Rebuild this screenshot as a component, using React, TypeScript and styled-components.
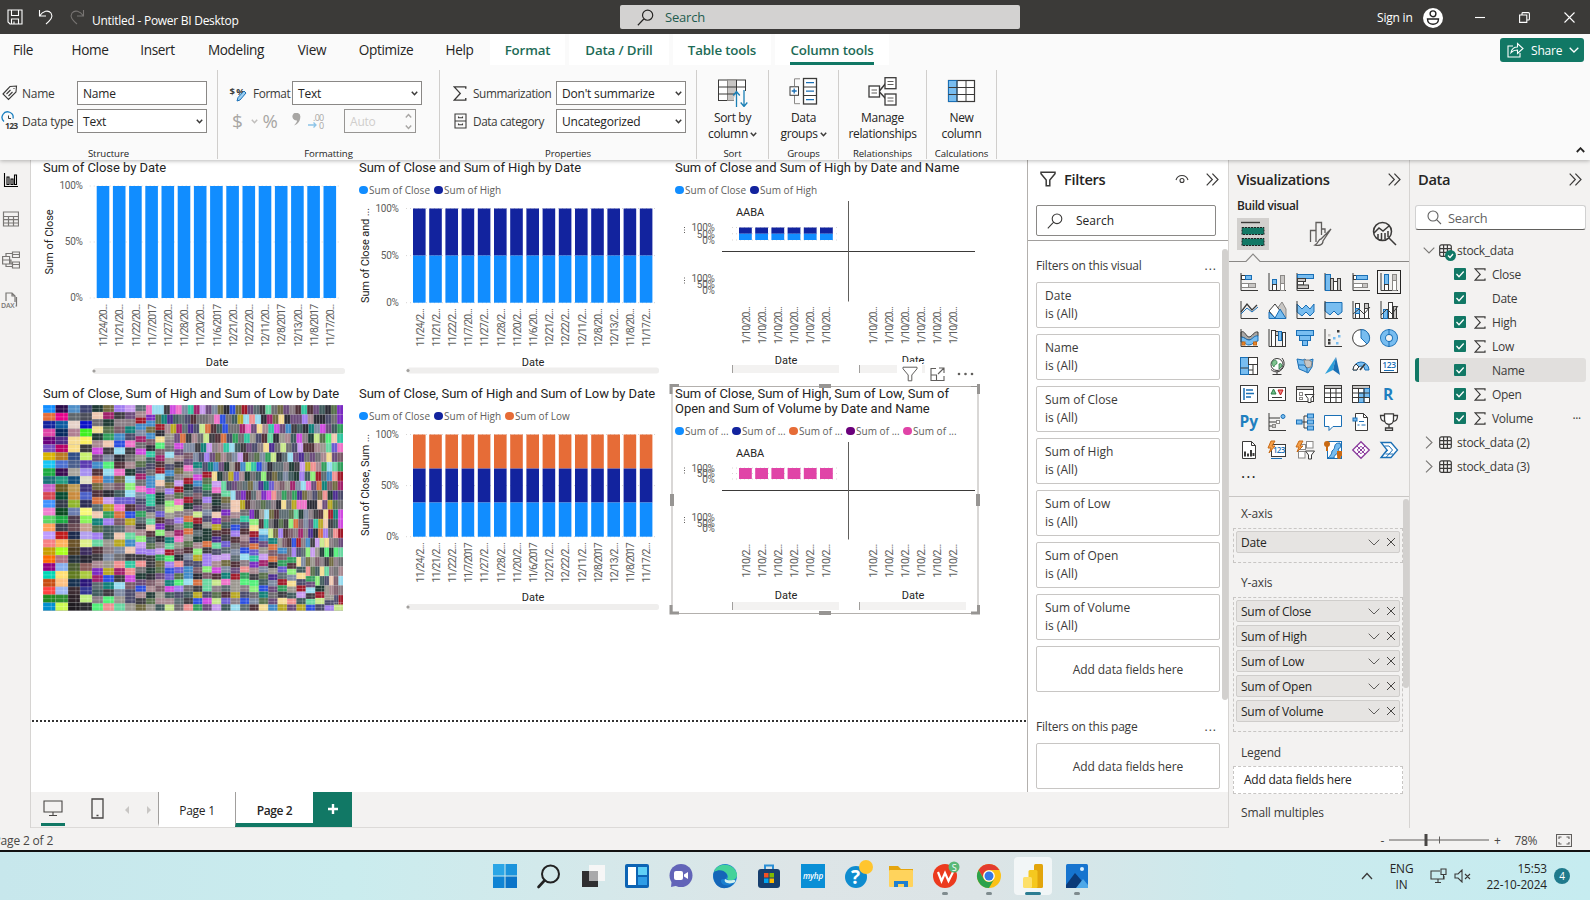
import React from 'react';
import styled, { createGlobalStyle } from 'styled-components';

const GREEN = '#117865';
const INK = '#252423';
const BLUE = '#118dff';
const NAVY = '#12239e';
const ORANGE = '#e66c37';
const PURPLE = '#6b007b';
const PINK = '#e044a7';
const UI = '"Open Sans", "Noto Sans", sans-serif';

const Global = createGlobalStyle`
  *{box-sizing:border-box}
  body{margin:0;overflow:hidden;font-family:${UI};font-size:12px;letter-spacing:-.2px;color:${INK};background:#fff}
  svg{display:block;flex:none}
`;

const Window = styled.div`width:1590px;height:900px;display:flex;flex-direction:column;overflow:hidden;`;

/* ---------- title bar ---------- */
const TitleBar = styled.header`height:34px;background:#3b3a38;color:#fff;display:flex;align-items:center;flex:none;`;
const QuickTools = styled.div`display:flex;gap:15px;padding-left:7px;width:92px;`;
const DocTitle = styled.div`width:528px;padding-top:7px;letter-spacing:-.27px;white-space:nowrap;`;
const TopSearch = styled.div`width:400px;height:24px;background:#d3d2d1;border-radius:2px;display:flex;align-items:center;gap:11px;padding-left:17px;color:#1f5c4f;font-size:13px;`;
const Account = styled.div`margin-left:auto;display:flex;align-items:center;gap:10px;width:213px;padding-top:1px;`;
const WinButtons = styled.div`display:flex;gap:34px;margin-left:22px;`;

/* ---------- ribbon ---------- */
const TabRow = styled.nav`height:34px;background:#fafafa;display:flex;flex:none;position:relative;z-index:4;font-size:14px;`;
const Tab = styled.div<{ $w: number; $ctx?: boolean; $on?: boolean }>`
  width:${p => p.$w}px;height:31px;display:flex;justify-content:center;line-height:32px;white-space:nowrap;letter-spacing:${p => (p.$ctx ? -.15 : -.34)}px;
  color:${p => (p.$ctx ? '#1d6b56' : INK)};font-weight:${p => (p.$ctx ? 600 : 400)};
  background:${p => (p.$ctx ? '#fff' : 'transparent')};margin-right:${p => (p.$ctx ? 4 : 0)}px;font-size:${p => (p.$ctx ? 13.3 : 13.6)}px;
  span{border-bottom:${p => (p.$on ? `3px solid ${GREEN}` : '0')};height:31px}
`;
const TabGap = styled.i`width:10px;`;
const Share = styled.div`margin-left:auto;margin-right:6px;margin-top:4px;width:84px;height:24px;border-radius:3px;background:${GREEN};color:#fff;display:flex;align-items:center;padding-left:7px;gap:7px;font-size:12px;`;
const Ribbon = styled.div`height:92px;background:#fafafa;display:flex;flex:none;position:relative;z-index:3;box-shadow:0 1px 4px rgba(0,0,0,.28);padding-top:2px;`;
const Group = styled.section<{ $w: number }>`width:${p => p.$w}px;height:89px;border-right:1px solid #d0cecc;display:flex;flex-direction:column;flex:none;`;
const GroupBody = styled.div`flex:1;display:flex;flex-direction:column;gap:4px;padding-top:11px;`;
const GroupName = styled.div`height:11px;line-height:12px;font-size:9.6px;text-align:center;letter-spacing:-.05px;`;
const FieldRow = styled.div<{ $pad: number }>`display:flex;height:24px;align-items:center;padding-left:${p => p.$pad}px;`;
const FieldLabel = styled.div<{ $w: number; $tight?: boolean }>`width:${p => p.$w}px;padding-left:${p => (p.$tight ? 6 : 4)}px;white-space:nowrap;color:#3b3a39;font-size:${p => (p.$tight ? 11.8 : 12)}px;letter-spacing:${p => (p.$tight ? -.4 : -.25)}px;`;
const Box = styled.div<{ $w: number; $dim?: boolean }>`
  width:${p => p.$w}px;height:24px;border:1px solid ${p => (p.$dim ? '#979593' : '#8a8886')};background:${p => (p.$dim ? '#fafafa' : '#fff')};
  display:flex;align-items:center;justify-content:space-between;padding:1px 3px 0 5px;color:${p => (p.$dim ? '#d0cecc' : INK)};letter-spacing:-.2px;
`;
const Dim = styled.span<{ $w: number; $s?: number }>`width:${p => p.$w}px;font-size:${p => p.$s ?? 19}px;color:#a8a6a4;line-height:24px;`;
const BigButton = styled.div`flex:1;display:flex;flex-direction:column;align-items:center;padding-top:7px;line-height:16px;text-align:center;letter-spacing:-.33px;
  svg{margin-bottom:3px} div{display:flex;align-items:center;gap:2px} div svg{margin:0}
`;
const Collapse = styled.div`margin-left:auto;margin-right:5px;margin-top:77px;`;

/* ---------- body ---------- */
const Body = styled.div`height:668px;display:flex;flex:none;`;
const Rail = styled.aside`width:31px;background:#f3f2f1;border-right:1px solid #d6d4d2;display:flex;flex-direction:column;align-items:flex-start;flex:none;padding-top:12px;`;
const RailItem = styled.div`height:40.3px;padding-left:2px;display:flex;align-items:flex-start;&:first-child{height:39px}`;
const Center = styled.main`width:1197px;display:flex;flex-direction:column;flex:none;`;
const Work = styled.div`height:632px;display:flex;`;
const Canvas = styled.div`width:996px;position:relative;background:#fff;overflow:hidden;`;
const VisualGrid = styled.div`display:grid;grid-template-columns:repeat(3,316px);grid-template-rows:226px 228px;padding-left:12px;`;
const Visual = styled.article`position:relative;width:316px;`;
const VTitle = styled.h3`margin:0;font:400 13px/15px Roboto,sans-serif;letter-spacing:-.04px;white-space:nowrap;`;
const VHead = styled.div<{ $h: number }>`height:${p => p.$h}px;overflow:visible;`;
const Legend = styled.div<{ $gap: number }>`display:flex;gap:${p => p.$gap}px;margin-top:7px;height:16px;align-items:center;font-size:10px;color:#605e5c;letter-spacing:.03px;white-space:nowrap;`;
const Key = styled.span<{ $c: string; $w: number }>`display:flex;align-items:center;gap:1.5px;width:${p => p.$w}px;
  &::before{content:"";width:8.5px;height:8.5px;border-radius:50%;background:${p => p.$c};flex:none}
`;
const PageEdge = styled.div`position:absolute;top:560px;left:1px;right:1px;height:2px;background:repeating-linear-gradient(90deg,#333 0 2px,#fff 2px 4px);`;
const Selection = styled.svg`position:absolute;left:-5px;top:-2px;overflow:visible;`;
const VisualTools = styled.div`position:absolute;left:222px;top:-24px;width:80px;height:24px;display:flex;gap:12px;align-items:center;padding-left:5px;background:linear-gradient(90deg,#fff 0 25px,transparent 25px 28px,#fff 28px);`;

const Filters = styled.aside`width:201px;border-left:1px solid #b3b0ad;background:#fff;flex:none;display:flex;flex-direction:column;overflow:hidden;`;
const PanelHead = styled.div<{ $pl: number; $pr: number }>`height:40px;display:flex;align-items:center;padding:0 ${p => p.$pr}px 2px ${p => p.$pl}px;font-size:14.7px;font-weight:600;letter-spacing:-.35px;gap:8px;flex:none;`;
const Push = styled.i`margin-left:auto;`;
const SearchBox = styled.div`margin:5px 0 0 8px;width:180px;height:31px;border:1px solid #8a8886;border-radius:2px;display:flex;align-items:center;padding-left:10px;gap:13px;letter-spacing:0;`;
const FilterScroll = styled.div`margin-top:4px;border-top:1px solid #a19f9d;flex:1;display:flex;padding-left:8px;`;
const FilterList = styled.div`width:184px;display:flex;flex-direction:column;gap:6px;`;
const FilterHead = styled.div<{ $h: number }>`height:${p => p.$h}px;display:flex;justify-content:space-between;align-items:flex-end;padding:0 3px 2px 0;letter-spacing:-.2px;line-height:17px;white-space:nowrap;color:#3b3a39;b{font-weight:400;letter-spacing:1px}`;
const FilterCard = styled.div`height:46px;border:1px solid #c8c6c4;border-radius:2px;padding:4px 8px;line-height:18px;letter-spacing:0;color:#3b3a39;flex:none;`;
const DropCard = styled(FilterCard)`display:flex;align-items:center;justify-content:center;padding:2px 0 0;letter-spacing:-.09px;`;
const Scroll = styled.div<{ $h: number; $mt: number }>`width:6px;height:${p => p.$h}px;margin-top:${p => p.$mt}px;background:#d2d0ce;border-radius:3px;margin-left:auto;`;

const PageBar = styled.div`height:36px;background:#f3f2f1;display:flex;align-items:stretch;border-bottom:1px solid #dcdad8;`;
const ViewModes = styled.div`width:127px;display:flex;align-items:center;padding-left:10px;`;
const Mode = styled.div<{ $on?: boolean }>`width:24px;height:32px;border-bottom:3px solid ${p => (p.$on ? GREEN : 'transparent')};display:flex;align-items:center;justify-content:center;margin-right:${p => (p.$on ? 20 : 15)}px;`;
const PageTab = styled.div<{ $on?: boolean }>`width:${p => (p.$on ? 78 : 77)}px;background:#fff;border-left:1px solid #a19f9d;border-bottom:4px solid ${p => (p.$on ? GREEN : '#fff')};display:flex;align-items:center;justify-content:center;padding-top:5px;font-weight:${p => (p.$on ? 600 : 400)};letter-spacing:${p => (p.$on ? -.4 : -.25)}px;`;
const AddPage = styled.div`width:39px;background:${GREEN};display:flex;align-items:center;justify-content:center;padding-bottom:2px;`;

const Side = styled.aside<{ $w: number }>`width:${p => p.$w}px;background:#f3f2f1;border-left:1px solid #d6d4d2;display:flex;flex-direction:column;flex:none;overflow:hidden;`;
const BuildLabel = styled.div`height:16px;line-height:11px;padding-left:8px;font-weight:600;letter-spacing:-.35px;font-size:11.9px;`;
const BuildTabs = styled.div`height:34px;margin-top:1px;display:flex;align-items:center;padding-left:8px;gap:39px;`;
const BuildTab = styled.div<{ $on?: boolean }>`width:${p => (p.$on ? 32 : 25)}px;height:32px;display:flex;align-items:center;justify-content:center;background:${p => (p.$on ? '#d2d0ce' : 'transparent')};`;
const IconGrid = styled.div`display:grid;grid-template-columns:repeat(6,28px);grid-auto-rows:28px;padding:4px 0 0 7px;height:200px;`;
const IconCell = styled.div<{ $on?: boolean }>`width:24px;height:24px;margin:1px 0 0 1px;border:1px solid ${p => (p.$on ? '#252423' : 'transparent')};display:flex;align-items:center;justify-content:center;`;
const Dots = styled.div`height:31px;padding-left:12px;font-size:16px;letter-spacing:1px;line-height:14px;`;
const Wells = styled.div`border-top:1px solid #c8c6c4;flex:1;display:flex;`;
const WellList = styled.div`width:174px;padding:4px 0 0 4px;`;
const WellName = styled.div<{ $h?: number }>`height:${p => p.$h ?? 27}px;line-height:25px;padding-left:8px;letter-spacing:-.15px;color:#3b3a39;white-space:nowrap;`;
const Well = styled.div<{ $mb: number; $white?: boolean }>`border:1px dashed #c8c6c4;background:${p => (p.$white ? '#fff' : 'transparent')};padding:2px 2px ${p => (p.$white ? 2 : 9)}px 2px;display:flex;flex-direction:column;gap:3px;margin-bottom:${p => p.$mb}px;`;
const Pill = styled.div<{ $plain?: boolean }>`height:22px;background:${p => (p.$plain ? 'transparent' : '#e6e4e2')};border:1px solid ${p => (p.$plain ? 'transparent' : '#cfcdcb')};border-radius:2px;display:flex;align-items:center;padding:0 3px 0 ${p => (p.$plain ? 7 : 4)}px;gap:6px;letter-spacing:-.23px;white-space:nowrap;`;

const DataSearch = styled.div`margin:5px 4px 0 5px;height:25px;background:#fff;border:1px solid #d1d1d1;border-bottom-color:#605e5c;border-radius:3px;display:flex;align-items:center;gap:6px;padding-left:11px;color:#616161;font-size:12.8px;`;
const Tree = styled.div`padding:8px 4px 0 5px;`;
const TreeRow = styled.div<{ $on?: boolean; $pad: number }>`height:24px;display:flex;align-items:center;padding-left:${p => p.$pad - (p.$on ? 4 : 0)}px;background:${p => (p.$on ? '#e1dfdd' : 'transparent')};border-left:${p => (p.$on ? `4px solid ${GREEN}` : '0')};border-radius:3px;letter-spacing:-.28px;white-space:nowrap;padding-right:5px;color:#3b3a39;`;
const SigmaSlot = styled.span`width:26px;padding-left:8px;`;
const TableSlot = styled.span<{ $ml?: number }>`width:18px;margin-left:${p => p.$ml ?? 4}px;position:relative;`;
const OkBadge = styled.svg`position:absolute;left:6px;top:6px;`;

/* ---------- status + taskbar ---------- */
const Status = styled.footer`height:24px;background:#f3f2f1;display:flex;align-items:center;justify-content:space-between;flex:none;border-bottom:2px solid #111;color:#484644;padding:2px 18px 0 0;
  > span{margin-left:-6.5px;letter-spacing:-.17px}`;
const ZoomBar = styled.div`display:flex;align-items:center;gap:5px;letter-spacing:-.4px;`;
const ZoomValue = styled.span`margin:0 14px 0 9px;`;
const Gap = styled.i<{ $w: number }>`width:${p => p.$w}px;flex:none;`;
const Taskbar = styled.div`height:48px;display:flex;align-items:center;background:linear-gradient(90deg,#c7e7ec 0,#caecee 22%,#dde5e7 50%,#dce4e6 62%,#cbeaed 78%,#c6ecf0 100%);position:relative;`;
const AppRow = styled.div`display:flex;padding-left:483px;`;
const AppSlot = styled.div<{ $on?: boolean; $dot?: boolean }>`width:44px;height:46px;display:flex;align-items:center;justify-content:center;position:relative;
  &::before{content:"";position:absolute;inset:4px 3px;border-radius:4px;background:${p => (p.$on ? 'rgba(255,255,255,.65)' : 'transparent')}}
  &::after{content:"";position:absolute;bottom:4px;width:${p => (p.$on ? 16 : 6)}px;height:3px;border-radius:2px;background:${p => (p.$on ? '#2b7d92' : p.$dot ? '#7f8b8e' : 'transparent')}}
  svg{position:relative}
`;
const Tray = styled.div`margin-left:auto;display:flex;align-items:center;padding-right:20px;font-size:11.8px;line-height:16px;letter-spacing:-.1px;`;
const TrayText = styled.div<{ $w: number; $a?: string }>`width:${p => p.$w}px;text-align:${p => p.$a ?? 'center'};`;
const Count = styled.div`width:16px;height:16px;border-radius:50%;background:#1f7a8c;color:#fff;font-size:10px;display:flex;align-items:center;justify-content:center;margin-left:7px;`;

/* ---------- shared glyphs ---------- */
const Lines = ({ d, w = 16, h = 16, c = '#3b3a39', s = 1.1, box }: { d: string; w?: number; h?: number; c?: string; s?: number; box?: string }) => (
  <svg width={w} height={h} viewBox={box ?? `0 0 ${w} ${h}`} fill="none" stroke={c} strokeWidth={s}><path d={d} /></svg>
);
const Caret = ({ c = '#3b3a39' }: { c?: string }) => <Lines w={7} h={5} c={c} s={1.5} d="M.8 .8 3.5 3.7 6.2.8" />;
const Chevrons = () => <Lines w={13} h={13} s={1.2} d="M.7.7 6.3 6.5.7 12.3M6.4.7 12 6.5 6.4 12.3" />;
const Sigma = ({ w = 12, h = 13 }: { w?: number; h?: number }) => <Lines w={w} h={h} box="0 0 12 13" s={1.2} d="M11 2.4V.8H1l5.2 5.6L1 12.2h10v-1.7" />;
const Lens = ({ c = '#3b3a39', s = 16 }: { c?: string; s?: number }) => <Lines w={s} h={s} box="0 0 16 16" c={c} d="M10 1a4.8 4.8 0 1 1 0 9.6A4.8 4.8 0 0 1 10 1ZM6.6 9.2.8 15.3" />;
const Funnel = ({ s = 16, c = '#3b3a39', w = 1.5 }: { s?: number; c?: string; w?: number }) => <Lines w={s} h={s} box="0 0 16 16" c={c} s={w} d="M1 1.2h14v1.6L9.8 9v5.8H6.2V9L1 2.8Z" />;
const TableGlyph = () => <Lines w={13} h={13} s={1.2} d="M2.5.8h8a1.8 1.8 0 0 1 1.8 1.8v8a1.8 1.8 0 0 1-1.8 1.8h-8A1.8 1.8 0 0 1 .7 10.600V2.600A1.800 1.800 0 0 1 2.500.8ZM.7 4.600h11.600M.7 8.400h11.600M4.600.8v11.600M8.400.8v11.600" />;

/* ---------- charts ---------- */
const VText = ({ x, y, len, children, size = 10.5, fill = '#605e5c' }: { x: number; y: number; len: number; children: string; size?: number; fill?: string }) => (
  <text transform={`translate(${x} ${y}) rotate(-90)`} textLength={len} fontSize={size} fontFamily="Roboto" fill={fill}>{children}</text>
);
const Tick = ({ x, y, children }: { x: number; y: number; children: string }) => (
  <text x={x} y={y + 3.4} textAnchor="end" fontSize="10" fontFamily="Roboto" letterSpacing="-.3" fill="#605e5c">{children}</text>
);
const DateWord = ({ x, y }: { x: number; y: number }) => (
  <text x={x - 11.300} y={y + 4} textLength="22.500" fontSize="11" fontFamily="Roboto" fill={INK}>Date</text>
);

interface ColumnProps {
  top: number; plot: [number, number]; x0: number; tickX: number; labels: string[]; bottom: number; labelLen: number;
  axis: string; axisSpan: [number, number]; dateY: number; barY: number; parts: [number, string][]; from: number;
}
const ColumnPlot = (p: ColumnProps) => {
  const [y0, y1] = p.plot;
  const h = y1 - y0;
  return (
    <svg width="316" height={226 - p.top} viewBox={`0 ${p.top} 316 ${226 - p.top}`} overflow="visible">
      {[0, .5, 1].map(t => <line key={t} x1={p.x0 - 7} x2={p.x0 + 244} y1={y0 + h * t} y2={y0 + h * t} stroke="#d8d6d4" strokeDasharray="1 3" />)}
      {['100%', '50%', '0%'].map((t, i) => <Tick key={t} x={p.tickX} y={y0 + (h * i) / 2}>{t}</Tick>)}
      {p.labels.map((l, i) => {
        let acc = 0;
        return (
          <g key={i}>
            {p.parts.map(([f, c], j) => {
              const yy = y0 + h * acc;
              acc += f;
              return <rect key={j} x={p.x0 + i * 16.2} y={yy} width="12.600" height={h * f} fill={c} />;
            })}
            <VText x={p.x0 + i * 16.2 + 10.5} y={p.bottom} len={p.labelLen}>{l}</VText>
          </g>
        );
      })}
      <VText x={9.700} y={p.axisSpan[1]} len={p.axisSpan[1] - p.axisSpan[0]} fill={INK} size={11}>{p.axis}</VText>
      <DateWord x={174} y={p.dateY} />
      <rect x={p.from} y={p.barY} width="252" height="6" rx="2.500" fill="#efeeed" />
      <circle cx={p.from + 1} cy={p.barY + 3} r="1.600" fill="#a19f9d" />
    </svg>
  );
};

interface MultiplesProps {
  top: number; name: number; plot: [number, number]; second: number; cross: [number, number, number]; label: string; labelLen: number;
  bottom: number; dateY: number; barY: number; parts: [number, string][]; step: number;
}
const MultiplesPlot = (p: MultiplesProps) => {
  const [y0, y1] = p.plot;
  const six = [0, 1, 2, 3, 4, 5];
  return (
    <svg width="316" height={227 - p.top} viewBox={`0 ${p.top} 316 ${227 - p.top}`} overflow="visible">
      <text x="61" y={p.name + 4} fontSize="11" textLength="28" fontFamily="Roboto" fill={INK}>AABA</text>
      {[y0, (y0 + y1) / 2, y1].map(y => <line key={y} x1="57" x2="164" y1={y} y2={y} stroke="#d8d6d4" strokeDasharray="1 3" />)}
      {[y0 + .5, p.second].map(y => (
        <g key={y}>
          {['100%', '50%', '0%'].map((t, i) => <Tick key={t} x={39.500} y={y + i * p.step}>{t}</Tick>)}
          <path d={`M9.500 ${y - 1}v6`} stroke="#605e5c" strokeDasharray="1 1.500" />
        </g>
      ))}
      {six.map(i => {
        let acc = 0;
        return p.parts.map(([f, c], j) => {
          const yy = y0 + (y1 - y0) * acc;
          acc += f;
          return <rect key={`${i}-${j}`} x={64 + i * 16.2} y={yy} width="12.800" height={(y1 - y0) * f} fill={c} />;
        });
      })}
      <path d={`M47 ${p.cross[0]}H300`} stroke="#3b3a39" />
      <path d={`M173.500 ${p.cross[1]}V${p.cross[2]}`} stroke="#605e5c" />
      {[0, 127].map(dx => (
        <g key={dx}>
          {six.map(i => <VText key={i} x={74.500 + dx + i * 16.1} y={p.bottom} len={p.labelLen}>{p.label}</VText>)}
          <DateWord x={111 + dx} y={p.dateY} />
          <rect x={57 + dx} y={p.barY} width="107" height="8" fill="#f3f2f1" />
          <path d={`M${57.500 + dx} ${p.barY}v8`} stroke="#a19f9d" />
        </g>
      ))}
    </svg>
  );
};

const SEEDED = ['#118dff', '#e66c37', '#12239e', '#e044a7', '#6b007b', '#744ec2', '#d9b300', '#15c6f4', '#1aab40', '#197278', '#c860c8', '#d64550', '#4092ff', '#f07fd0', '#5cd666', '#ffa058', '#be9cff', '#f87f83', '#c89d00', '#ff6a00', '#920080', '#00d6b4', '#c84c10', '#ff4141', '#1f8a1f', '#0090d0'];
const SECOND = ['#2a0a4a', '#e8008a', '#0b5aa0', '#06295e', '#4b2a86', '#b80068', '#b87a20', '#4a6fd0', '#3a0a50', '#1f9a80', '#6b5a20', '#064a30', '#333a48', '#0a4a20', '#1aab40', '#3a3d48', '#c01a1a', '#ffb05a', '#a8ff1a', '#b07080', '#86aef0', '#ffdf70', '#ffc080', '#a0b8f4', '#2d8c2d', '#cdfb50'];
const THIRD = ['#4f8fc8', '#5e666c', '#e6d2c8', '#b07f92', '#f7dd92', '#f9dd86', '#2f4c86', '#4a5e8c', '#a8a49c', '#0f4a78', '#c09a50', '#c98a3c', '#8fb52a', '#6a7cae', '#4c3a4a', '#6a4a52', '#1c2a4c', '#6a5228', '#4a3a20', '#23303a', '#4a5a30', '#5f7a1e', '#16304e', '#3a2a30', '#2a2026', '#1e1a20'];
const FOURTH = ['#3c4270', '#4a4c58', '#0a10c8', '#3cf01e', '#fbf060', '#3a3a3e', '#c8f26e', '#5a3ab0', '#a690f0', '#e2dfc4', '#3a2f78', '#4a60c8', '#2c2c54', '#f8f878', '#8cf45a', '#c8a08e', '#b4a0f0', '#dff08a', '#3a2a5c', '#262430', '#8a5a58', '#a8c83c', '#2a1478', '#303490', '#c0f080', '#2a2c30'];
const LIVELY = ['#f070c8', '#8cf078', '#a07cf0', '#2fc6a0', '#f5dc90', '#96dcf0', '#2a4de0', '#a01828', '#f09090', '#c8e88a', '#2f9e5a', '#7a2ac2', '#b8a820', '#a0206a', '#d87040', '#66d8a0', '#c89bf0', '#f0c8b0', '#4a2a90', '#108078', '#6a5ad0', '#50f078', '#d048e0', '#3f8ac8'];
const QUIET = ['#6e6c70', '#3c3a40', '#8a7c84', '#5a6a70', '#2a2a34', '#7a5a68', '#56704a', '#9a968e', '#6a4a7a', '#3f5a5c', '#7e8aa2', '#503038', '#706a40', '#a88890', '#4a4a6a', '#1f3a34'];

const buildTreemap = () => {
  let seed = 4242;
  const rnd = () => { seed = (seed * 1103515245 + 12345) % 2147483648; return seed / 2147483648; };
  const tone = (lively: number) => { const list = rnd() < lively ? LIVELY : QUIET; return list[Math.floor(rnd() * list.length)]; };
  const out: { x: number; y: number; w: number; h: number; c: string; v: boolean }[] = [];
  const known = [SEEDED, SECOND, THIRD, FOURTH];
  const edges = [0, 12.5, 25, 37, 49, 60, 71, 82, 92.5, 103];
  for (let i = 0; i < 21; i++) edges.push(103 + (i + 1) * 9.4);
  const H = 205.5;
  for (let c = 0; c < edges.length - 1; c++) {
    const x = edges[c];
    const w = edges[c + 1] - x;
    const top = c < 9 ? 0 : Math.min(H - 8, (c - 8) * 9.5);
    const n = Math.max(1, Math.round((H - top) / (c < 4 ? 7.9 : c < 8 ? 7 : 6.2)));
    const h = (H - top) / n;
    for (let r = 0; r < n; r++) out.push({ x, y: top + r * h, w, h, c: c < 4 ? known[c][r % 26] : tone(.46), v: false });
    if (c >= 9) {
      const y = (c - 9) * 9.5;
      const m = Math.max(1, Math.round((300 - x) / (6 - (c - 9) * .09)));
      const cw = (300 - x) / m;
      for (let r = 0; r < m; r++) out.push({ x: x + r * cw, y, w: cw, h: 9.5, c: tone(.42), v: true });
    }
  }
  return out;
};
const CELLS = buildTreemap();
const Treemap = () => (
  <svg width="300" height="205.500" viewBox="0 0 300 205.500">
    <rect width="300" height="205.500" fill="#77757a" />
    {CELLS.map((r, i) => <rect key={i} x={r.x} y={r.y} width={r.w} height={r.h} fill={r.c} />)}
    <path
      stroke="#fff" strokeOpacity=".33" strokeWidth=".7" fill="none"
      d={CELLS.map(r => (r.v
        ? `M${r.x} ${r.y + r.h}v${-r.h}h${r.w}M${r.x + r.w / 2} ${r.y}v${r.h}`
        : `M${r.x} ${r.y + r.h}v${-r.h}h${r.w}M${r.x} ${r.y + r.h / 2}h${r.w}M${r.x + r.w * .66} ${r.y}v${r.h}`)).join('')}
    />
  </svg>
);

const L20 = ['11/24/20...', '11/21/20...', '11/22/20...', '11/7/2017', '11/27/20...', '11/28/20...', '11/20/20...', '11/6/2017', '12/21/20...', '12/22/20...', '12/11/20...', '12/8/2017', '12/13/20...', '11/8/2017', '11/17/20...'];
const L2 = ['11/24/2...', '11/21/2...', '11/22/2...', '11/7/20...', '11/27/2...', '11/28/2...', '11/20/2...', '11/6/20...', '12/21/2...', '12/22/2...', '12/11/2...', '12/8/20...', '12/13/2...', '11/8/20...', '11/17/2...'];
const L3 = L2.map((l, i) => ([3, 7, 11, 13].includes(i) ? L20[i] : l));

/* ---------- visual type icons, 18x18 ---------- */
const B = '#78bdf0';
const D = '#3b3a39';
const G = '#c8c6c4';
const K = '#1a6fb5';
const frame = <path d="M1 0v17.500h17" fill="none" stroke={D} />;
const R = (x: number, y: number, w: number, h: number, f: string, s: string = D) => <rect x={x} y={y} width={w} height={h} fill={f} stroke={s} />;
const ICONS: React.ReactNode[] = [
  <>{frame}{R(1.5, 2.500, 5, 4, '#fff')}{R(5.5, 2.500, 6, 4, B, K)}{R(1.5, 10.500, 7, 4, '#fff', '#8a8886')}{R(8.500, 10.500, 7, 4, G, '#8a8886')}</>,
  <>{frame}{R(4.500, 6.500, 4, 5, B, K)}{R(4.500, 11.500, 4, 6, '#fff')}{R(12.500, 2.500, 4, 8, G, '#8a8886')}{R(12.500, 10.500, 4, 7, '#fff', '#8a8886')}</>,
  <>{frame}{R(1.5, 1.500, 16, 4, B, K)}{R(1.5, 5.500, 8, 3, G)}{R(1.5, 8.500, 6, 3.500, '#fff')}{R(1.5, 12, 11, 3.500, G)}</>,
  <>{frame}{R(1.5, 1.500, 5, 16, B, K)}{R(6.500, 5.500, 3, 12, G)}{R(9.500, 8.500, 4, 9, '#fff')}{R(13.500, 5.500, 3, 12, G)}</>,
  <>{frame}{R(1.5, 2.500, 6, 4, '#fff')}{R(4.500, 2.500, 11, 4, B, K)}{R(1.5, 10.500, 9, 4, '#fff', '#8a8886')}{R(10.500, 10.500, 5, 4, G, '#8a8886')}</>,
  <>{frame}{R(4.500, 1.500, 4, 10, B, K)}{R(4.500, 11.500, 4, 6, '#fff')}{R(12.500, 1.500, 4, 6, G, '#8a8886')}{R(12.500, 7.500, 4, 10, '#fff', '#8a8886')}</>,
  <>{frame}<path d="M1 13 7 7l5 4 6-5" fill="none" stroke={K} /><path d="m1 11 6-8 5 6 5-5" fill="none" stroke={D} strokeWidth="1.300" /></>,
  <><path d="m9 8 5-7 4 7v9h-6Z" fill={G} stroke="#8a8886" /><path d="m1 10 6-7 6 8-6 6Z" fill="#fff" stroke={D} /><path d="M1 11 7 17l5-9 6 9.500H1Z" fill={B} stroke={K} /></>,
  <><path d="m1 3 5 5 4-4 4 4 4-5v8l-4 4-4-4-4 4-5-4Z" fill={B} stroke={K} />{frame}</>,
  <><path d="M1 1.500h17V11l-4 3-4-4-4 4-5-4Z" fill={B} stroke={K} />{frame}</>,
  <>{frame}{R(3.500, 2.500, 4, 15, '#fff')}{R(3.500, 7.500, 4, 5, B, K)}{R(12.500, 2.500, 4, 15, '#fff')}{R(12.500, 2.500, 4, 5, G)}<path d="m1 13 6-5 5 5 6-7" fill="none" stroke={D} /></>,
  <>{frame}{R(3.500, 8.500, 4, 9, B, K)}{R(8.500, 1.500, 4, 16, '#fff')}{R(13.500, 5.500, 3, 12, G)}<path d="m1 14 6-6 5 5 6-8" fill="none" stroke={D} /></>,
  <><path d="M1 3c4-2 5 5 8 5s5-6 9-5v4c-4 0-5 4-9 4S5 8 1 8Z" fill="#a9a7a5" stroke={D} /><path d="M1 8c4 0 5 3 8 3s5-5 9-4v5c-4 0-5 4-9 4s-4-4-8-3Z" fill={B} stroke={K} />{R(2, 13, 3, 3, '#e8872e', '#c96a14')}{R(13.500, 13, 3, 3, '#e8872e', '#c96a14')}{frame}</>,
  <>{frame}{R(3.500, 1.500, 4, 16, '#fff')}{R(7.500, 2.500, 4, 4, G)}{R(10.500, 2.500, 3, 9, B, K)}{R(14.500, 3.500, 3, 14, '#fff')}</>,
  <>{R(.5, 1.500, 17, 5, B, K)}{R(3.500, 6.500, 11, 5, B, K)}{R(6.500, 11.500, 5, 5, B, K)}</>,
  <>{frame}{[[4, 10, D], [9, 8, B], [13, 1, D], [14, 6, B], [4, 5, G], [12, 13, B], [4, 13, D]].map(([x, y, c], i) => <rect key={i} x={x as number} y={y as number} width="2.500" height="2.500" fill={c as string} />)}</>,
  <><circle cx="9" cy="9" r="8.400" fill="#fff" stroke={D} /><path d="M9 .6V9l6 6A8.400 8.400 0 0 0 9 .6Z" fill={B} stroke={K} /></>,
  <><circle cx="9" cy="9" r="6" fill="none" stroke={K} strokeWidth="6" /><circle cx="9" cy="9" r="6" fill="none" stroke={B} strokeWidth="4.200" /><path d="M9 6V0M9 12v6" stroke={K} /></>,
  <>{R(.5, .5, 17, 17, '#fff')}{R(.5, .5, 8, 17, B, K)}{R(8.500, .5, 9, 7, '#fff')}<path d="M.5 11h8M13 7.500v10M8.500 13H13" stroke={D} fill="none" /></>,
  <><circle cx="9" cy="7.500" r="6" fill="#fff" stroke={D} /><path d="M5 4c3-2 4 0 4 2s-3 1-3 4c-2-2-3-4-1-6Zm6 3c2-1 3 0 3 2l-3 3Z" fill="#7fc48f" stroke="#2a7a44" strokeWidth=".8" /><path d="M14 1c4 5 2 11-3 13.500-3 1-6 0-8-2M9 14.500V17M4.500 17.500h9" fill="none" stroke={D} /></>,
  <><path d="m1 2 6 1 2-1 2 2 6-2-1 8-4 6-4-2-5-2Z" fill={B} stroke={K} /><path d="M8 3h5l3 2-1 5-5 1Z" fill={G} stroke="#8a8886" /><path d="M2 8h6l3 3v4" fill="none" stroke={K} /></>,
  <><path d="M12 0 1 17l8-4Z" fill="#2fa0da" /><path d="m12 0 4 18-7-5Z" fill="#1a6fb5" /></>,
  <><path d="M1 13a8 8 0 0 1 16 0h-4a4 4 0 0 0-8 0Z" fill={B} stroke={K} /><path d="M1 13a8 8 0 0 1 3-6l3 3a4 4 0 0 0-2 3Z" fill="#fff" stroke={D} /><path d="m8 13 5-6" stroke={D} strokeWidth="1.600" /></>,
  <>{R(.5, 2.500, 17, 13, '#fff')}<text x="2.300" y="11" fontSize="8.500" fontWeight="600" fill={K} textLength="13.500">123</text><path d="M4 13.500h10" stroke={K} /></>,
  <>{R(.5, .5, 17, 17, '#fff')}<path d="M4 3v12M6 5h7M6 8.500h8M6 12h5" stroke={K} strokeWidth="1.500" /></>,
  <>{R(.5, 2.500, 17, 13, '#fff')}<path d="m3 9 2.500-5L8 9Z" fill="#6fc08a" stroke="#2a7a44" /><path d="m10 5 2.500 5L15 5Z" fill="#f08080" stroke="#c01a1a" /><path d="M4 12.500h10" stroke={D} /></>,
  <>{R(.5, 1.500, 17, 15, '#fff')}{R(.5, 1.500, 17, 3, G)}{R(3.500, 7.500, 3, 3, '#fff', '#8a8886')}{R(3.500, 12.500, 3, 2, '#fff', '#8a8886')}<path d="M9 9.500h9l-3 4v4h-3v-4Z" fill="#fff" stroke={D} /></>,
  <>{R(.5, .5, 17, 17, '#fff')}{R(.5, .5, 17, 3, G)}<path d="M.5 8h17M.5 12.500h17M6.500 3v14.500M12 3v14.500" stroke={D} /></>,
  <>{R(.5, .5, 17, 17, '#fff')}{R(.5, .5, 17, 3, G)}{R(12, 3.500, 5.500, 9, B, K)}{R(6.500, 8, 5.500, 9.500, B, K)}<path d="M.5 8h17M.5 12.500h17M6.500 3v14.500M12 3v14.500" stroke={D} /></>,
  <text x="3" y="14.500" fontSize="15.500" fontWeight="700" fill="#1f7fbf">R</text>,
  <text x="-.5" y="14" fontSize="15.500" fontWeight="700" fill="#1f7fbf" letterSpacing="0">Py</text>,
  <>{frame}<path d="M1 5h11M1 9h8M1 13h4" stroke={D} /><circle cx="15" cy="3.500" r="2" fill={B} stroke={K} />{R(8.500, 7.500, 3, 3, '#fff', '#8a8886')}{R(4.500, 11.500, 3, 3, G, '#8a8886')}</>,
  <><path d="M6 9h2V3h3M8 9h3M8 9v6h3" fill="none" stroke={D} />{R(.5, 7, 5.500, 4, B, K)}{R(11.500, 1, 6, 4, B, K)}{R(11.500, 7, 6, 4, B, K)}{R(11.500, 13, 6, 4, B, K)}</>,
  <path d="M.5 2.500h17v11H9l-4 4v-4H.5Z" fill="#fff" stroke={K} />,
  <><path d="M3.500 .5h8l4 4v13h-12Z" fill="#fff" stroke={D} /><path d="M11.500.5v4h4" fill="none" stroke={D} />{R(1, 5, 4, 3, B, K)}<path d="M7 8.500h5M5.500 12h2m2 0h4" stroke={K} /></>,
  <><path d="M4.500 .8h9v6a4.500 4.500 0 0 1-9 0ZM4.500 2.500h-4c0 4 1 5.500 5 6M13.500 2.500h4c0 4-1 5.500-5 6M9 11v4M5.500 17.300h7V15h-7Z" fill="#fff" stroke={D} strokeWidth="1.300" /></>,
  <><path d="M2.500 .5h9l4 4v13h-13Z" fill="#fff" stroke={D} /><path d="M11.500.5v4h4" fill="none" stroke={D} /><path d="M5 10.500v5M8 12.500v3M11 9v6.500M13.500 12v3" stroke={D} strokeWidth="2" /></>,
  <>{R(3.500, 3.500, 14, 12, '#fff')}<text x="5" y="12" fontSize="8" fontWeight="600" fill={K} textLength="12">123</text><path d="M3 17.500h11" stroke={K} /><path d="M3 0 0 7h3l-2 5 6-7H4l3-5Z" fill="#f5a04a" stroke="#c96a14" /></>,
  <>{R(10.500, .5, 6.500, 6.500, '#fff', '#8a8886')}{R(2.500, 10.500, 6.500, 6.500, '#fff', '#8a8886')}{R(4.500, 3.500, 5, 5, '#fff', '#8a8886')}<path d="M9.500 10h9l-3 4v4h-3v-4Z" fill="#fff" stroke={D} /><path d="M3 0 0 6h3l-2 5 6-6H4l3-5Z" fill="#f5a04a" stroke="#c96a14" /></>,
  <>{R(3.500, .5, 14, 17, '#fff', K)}<path d="M16 2c-8 0-3 5-8 8 0 3-2 5-4 7h6c0-5 7-4 4-9 3-1 3-3 2-6Z" fill={B} stroke={K} /><circle cx="3" cy="3" r="3" fill="#c96a14" /><path d="M3 4v6" stroke="#c96a14" strokeWidth="2" /><rect x="13" y="10" width="5" height="5" fill="#c96a14" /><circle cx="15" cy="16" r="2" fill="#c96a14" /></>,
  <><path d="m9 .7 8.300 8.300L9 17.300.7 9Z" fill="#fff" stroke="#8a3a9c" strokeWidth="1.300" /><path d="m5 5 8.200 8.200M13 5l-8.200 8.200M9 5.200 12.800 9 9 12.800 5.200 9Z" stroke="#8a3a9c" fill="none" /></>,
  <><path d="M1 1.500h10L17.500 9 11 16.500H1L7 9Z" fill="#fff" stroke={K} strokeWidth="1.300" /><path d="M4.500 5H9l3.500 4L6 16.500M5.500 13H13M1 16.500 8 9" fill="none" stroke={K} /></>,
];

/* ---------- taskbar logos, 26x26 ---------- */
const APPS: { art: React.ReactNode; dot?: boolean; on?: boolean }[] = [
  { art: <><rect x="1" y="1" width="11.500" height="11.500" fill="#2ba6e6" /><rect x="13.500" y="1" width="11.500" height="11.500" fill="#1c94dc" /><rect x="1" y="13.500" width="11.500" height="11.500" fill="#0f84d4" /><rect x="13.500" y="13.500" width="11.500" height="11.500" fill="#0a74c8" /></> },
  { art: <><circle cx="14.500" cy="11" r="8.500" fill="none" stroke="#222" strokeWidth="2" /><path d="m8.500 17.500-6 6.500" stroke="#222" strokeWidth="2.600" strokeLinecap="round" /></> },
  { art: <><rect x="9" y="2" width="16" height="16" fill="#f6f6f6" /><rect x="2" y="8" width="16" height="16" fill="#2f2f31" /><rect x="9" y="8" width="9" height="10" fill="#a9a9ab" /></> },
  { art: <><rect x="1" y="1" width="24" height="24" rx="2" fill="#0d64b4" /><rect x="4" y="4" width="8" height="18" fill="#fff" /><rect x="14" y="4" width="9" height="8" fill="#5fd0f6" /><rect x="14" y="14" width="9" height="8" fill="#2e9de6" /></> },
  { art: <><circle cx="13" cy="12.500" r="11.500" fill="#6264b8" /><path d="M3 24l1-9 8 7Z" fill="#6264b8" /><rect x="6" y="8" width="9" height="9" rx="2" fill="#fff" /><path d="m16 11.500 4-2.500v7l-4-2.500Z" fill="#fff" /></> },
  { art: <><circle cx="13" cy="13" r="12" fill="#1a7fd0" /><path d="M2 9C5-1 22-1 25 11c1 6-7 8-10 5 4-5-6-10-13-7Z" fill="#44d29a" /><path d="M2 9c8-5 16 2 12 6-1 2-4 0-5 2-1 6 9 7 13 3-5 7-16 7-19-1-2-3-2-7-1-10Z" fill="#1566b8" /><path d="M13 16c-2 4 5 6 10 3 1-2 0-2-2-2s-5 1-8-1Z" fill="#d3f1ef" /></> },
  { art: <><path d="M9 6V2.500h8V6" fill="none" stroke="#2b8fd6" strokeWidth="2" /><rect x="2" y="6" width="22" height="19" rx="3" fill="#173f6e" /><rect x="8" y="10" width="4.500" height="4.500" fill="#f25022" /><rect x="13.500" y="10" width="4.500" height="4.500" fill="#7fba00" /><rect x="8" y="15.500" width="4.500" height="4.500" fill="#00a4ef" /><rect x="13.500" y="15.500" width="4.500" height="4.500" fill="#ffb900" /></> },
  { art: <><rect x="1" y="1" width="24" height="24" fill="#0a8fd6" /><text x="3" y="16" fontSize="9.500" fontWeight="600" fontStyle="italic" fill="#fff" textLength="20" lengthAdjust="spacingAndGlyphs">myhp</text></> },
  { art: <><circle cx="12" cy="14" r="11" fill="#0f8ccf" /><text x="7" y="21" fontSize="19" fontWeight="700" fill="#fff">?</text><circle cx="22" cy="4" r="7" fill="#ffc52e" /></> },
  { art: <><path d="M1 3h9l3 3h12v5H1Z" fill="#e5a50e" /><rect x="1" y="7" width="24" height="17" rx="1" fill="#ffd35c" /><path d="M6 24v-6h14v6Z" fill="#1f7fd0" /><path d="M10 24v-3h6v3Z" fill="#ffd35c" /></> },
  { art: <><circle cx="13" cy="13" r="12" fill="#ec3a1e" /><path d="m6 9 3.500 9L13 10l3.500 8L21 9" fill="none" stroke="#fff" strokeWidth="2.200" /><circle cx="22" cy="4" r="5.500" fill="#59b877" /><text x="19.700" y="7.500" fontSize="9" fill="#fff">S</text></>, dot: true },
  { art: <><circle cx="13" cy="13" r="12" fill="#fbc116" /><path d="M2.600 7A12 12 0 0 1 23.400 7H13a6 6 0 0 0-5.200 9Z" fill="#e33b2e" /><path d="M2.600 7A12 12 0 0 0 13 25l5.200-9a6 6 0 0 1-10.400 0Z" fill="#2ba24c" /><circle cx="13" cy="13" r="5.800" fill="#fff" /><circle cx="13" cy="13" r="4.500" fill="#3478e5" /></>, dot: true },
  { art: <><rect x="14" y="1" width="9" height="24" rx="1.500" fill="#e2a50c" /><rect x="8.500" y="7" width="9" height="18" rx="1.500" fill="#f5c81f" /><rect x="3" y="14" width="9" height="11" rx="1.500" fill="#fde06a" /></>, on: true },
  { art: <><rect x="2" y="1" width="22" height="24" rx="1.500" fill="#1674cf" /><path d="m2 22 9-12 13 15H2Z" fill="#0b3a78" /><path d="m12 25 7-9 5 6v3Z" fill="#4fa8e8" /><circle cx="18" cy="6" r="2" fill="#d9efff" /></>, dot: true },
];

const FIELDS = ['Close', 'Date', 'High', 'Low', 'Name', 'Open', 'Volume'];
const FILTERS = ['Date', 'Name', 'Sum of Close', 'Sum of High', 'Sum of Low', 'Sum of Open', 'Sum of Volume'];
const MENU: [string, number][] = [['File', 46], ['Home', 88], ['Insert', 47], ['Modeling', 110], ['View', 42], ['Optimize', 106], ['Help', 41]];

const FieldPill = ({ name }: { name: string }) => (
  <Pill>{name}<Push /><Lines w={12} h={7} s={1} c="#605e5c" d="m.7.7 5.300 5.300L11.300.7" /><Lines w={10} h={10} s={1} c="#484644" d="m1 1 8 8M9 1 1 9" /></Pill>
);

const Header = () => (
  <>
    <TitleBar>
      <QuickTools>
        <Lines c="#fff" d="M1 1h14v14H3l-2-2ZM4.500 1v5.500h7V1M4.500 15v-5h7v5M7 12.500V15" />
        <Lines c="#fff" d="M1.500 1v6H8M1.500 7C5 2 10 .5 13 4c2.500 4-.5 7-5 11" />
        <Lines c="#777472" d="M14.500 1v6H8M14.500 7C11 2 6 .5 3 4c-2.500 4 .5 7 5 11" />
      </QuickTools>
      <DocTitle>Untitled - Power BI Desktop</DocTitle>
      <TopSearch><Lens s={17} c="#252423" />Search</TopSearch>
      <Account>
        Sign in
        <svg width="20" height="20" viewBox="0 0 20 20"><circle cx="10" cy="10" r="10" fill="#fff" /><circle cx="10" cy="5.800" r="2.900" fill="none" stroke="#222" strokeWidth="1.400" /><path d="M4.500 11h11c0 7-11 7-11 0Z" fill="none" stroke="#222" strokeWidth="1.400" /></svg>
        <WinButtons>
          <Lines w={10} h={11} c="#fff" d="M0 5.500h10" />
          <Lines w={11} h={11} c="#fff" d="M.6 3h7.200v7.400H.600ZM3 3V1.500Q3 .6 4 .6h5.400q1 0 1 1V7q0 1-1 1H8" />
          <Lines w={11} h={11} c="#fff" d="m.5.5 10 10M10.500.5l-10 10" />
        </WinButtons>
      </Account>
    </TitleBar>
    <TabRow>
      {MENU.map(([t, w]) => <Tab key={t} $w={w}><span>{t}</span></Tab>)}
      <TabGap />
      <Tab $ctx $w={75}><span>Format</span></Tab>
      <Tab $ctx $w={100}><span>Data / Drill</span></Tab>
      <Tab $ctx $w={98}><span>Table tools</span></Tab>
      <Tab $ctx $on $w={114}><span>Column tools</span></Tab>
      <Share><Lines c="#fff" w={17} h={16} d="M6 4H1v11h12v-4M4 10.500C5 6 7 5 10.500 5V1.500L16 6.500l-5.500 5V8C7.500 8 6 8.500 4 10.500Z" />Share<Lines c="#fff" w={10} h={6} s={1.3} d="m.7.7 4.300 4.300L9.300.7" /></Share>
    </TabRow>
    <Ribbon>
      <Group $w={218}>
        <GroupBody>
          <FieldRow $pad={2}>
            <Lines d="M1 9 8 1.500l6.500-.5-.5 6L6.500 14.500ZM11.500 3.500h1M4.500 9l4-4M6.500 11l4-4" />
            <FieldLabel $w={59}>Name</FieldLabel><Box $w={130}>Name</Box>
          </FieldRow>
          <FieldRow $pad={2}>
            <svg width="16" height="16" viewBox="0 0 16 16" overflow="visible"><path d="M2 8.500A5.500 5.500 0 1 1 11 5.500" fill="none" stroke="#1a7fc0" strokeWidth="1.300" /><path d="M6.500 2.500v3H9" fill="none" stroke={D} /><text x="3" y="15.500" fontSize="8.500" fontWeight="700" fill={D} textLength="13">123</text></svg>
            <FieldLabel $w={59}>Data type</FieldLabel><Box $w={130}>Text<Caret /></Box>
          </FieldRow>
        </GroupBody>
        <GroupName>Structure</GroupName>
      </Group>
      <Group $w={222}>
        <GroupBody>
          <FieldRow $pad={12}>
            <svg width="17" height="17" viewBox="0 0 17 17" overflow="visible"><text x="-.5" y="9.500" fontSize="9.500" fontWeight="700" fill={D} textLength="15">$%</text><path d="m7 16 1-3.500L14 6l2 2-6 7Z" fill="#9ad0f4" stroke={K} /></svg>
            <FieldLabel $w={45} $tight>Format</FieldLabel><Box $w={130}>Text<Caret /></Box>
          </FieldRow>
          <FieldRow $pad={14}>
            <Dim $w={18}>$</Dim><Gap $w={1} /><Caret c="#c0bebc" /><Dim $w={26} $s={18.500}>&nbsp;%</Dim>
            <svg width="24" height="16" viewBox="0 0 24 16"><path d="M9 1.500a4 4 0 0 1 7.300 2.800C16 9 13 11.500 10 12.500c2-2 3-3.500 3-5A4 4 0 0 1 9 1.500Z" fill="#a8a6a4" /></svg>
            <svg width="17" height="17" viewBox="0 0 17 17" overflow="visible"><text x="5" y="7.500" fontSize="9" fill="#a8a6a4" textLength="11">.00</text><text x="11" y="16" fontSize="9" fill="#a8a6a4">0</text><path d="M0 12h8M5.500 9.500 8 12l-2.500 2.500" fill="none" stroke="#8cc4e8" strokeWidth="1.300" /></svg>
            <Push /><Box $w={72} $dim>Auto<Lines w={7} h={17} c="#a8a6a4" s={1.4} d="M.8 4.500 3.500 1.500l2.700 3M.8 12.500l2.700 3 2.700-3" /></Box><Gap $w={23} />
          </FieldRow>
        </GroupBody>
        <GroupName>Formatting</GroupName>
      </Group>
      <Group $w={257}>
        <GroupBody>
          <FieldRow $pad={13}><Sigma w={14} h={15} /><FieldLabel $w={89} $tight>Summarization</FieldLabel><Box $w={130}>Don't summarize<Caret /></Box></FieldRow>
          <FieldRow $pad={13}><Lines w={14} h={16} d="M2 1h11v14H2ZM2 8h11M5.500 3.500v1.300h4V3.500M5.500 10.500v1.300h4v-1.300" /><FieldLabel $w={89} $tight>Data category</FieldLabel><Box $w={130}>Uncategorized<Caret /></Box></FieldRow>
        </GroupBody>
        <GroupName>Properties</GroupName>
      </Group>
      <Group $w={72}>
        <BigButton>
          <svg width="31" height="30" viewBox="0 0 31 30"><rect x="1.500" y="3" width="27" height="20.500" fill="#fff" stroke={D} /><rect x="10.500" y="3" width="9" height="20.500" fill="#c8c6c4" stroke="#8a8886" /><path d="M1.500 10h27M1.500 17h27M19.500 3v20.500" fill="none" stroke={D} /><path d="M20 14h11v16H17v-9Z" fill="#fafafa" /><path d="M19.500 30V15M16.200 18.500l3.300-4 3.300 4M27 13v16M23.700 25.500l3.300 4 3.300-4" fill="none" stroke="#1a7fb5" strokeWidth="1.300" /></svg>
          <div>Sort by</div><div>column<Caret /></div>
        </BigButton>
        <GroupName>Sort</GroupName>
      </Group>
      <Group $w={70}>
        <BigButton>
          <svg width="29" height="30" viewBox="0 0 29 30"><rect x="14.500" y="1.500" width="13" height="25.500" fill="#fff" stroke={D} strokeWidth="1.300" /><path d="M14.500 10h13M14.500 18.500h13" stroke={D} /><path d="M17 5.700h8M17 14.200h8M17 22.700h8" stroke={K} strokeWidth="1.300" /><path d="M11 1.800H5.500V9M11 26.700H5.500V18" fill="none" stroke="#8a8886" /><rect x="1" y="9.800" width="8.500" height="8.500" fill="#fff" stroke={D} /><path d="M5.200 11.500v5M2.700 14h5" stroke={K} strokeWidth="1.300" /></svg>
          <div>Data</div><div>groups<Caret /></div>
        </BigButton>
        <GroupName>Groups</GroupName>
      </Group>
      <Group $w={88}>
        <BigButton>
          <svg width="29" height="30" viewBox="0 0 29 30"><path d="M11 14.500 18 6M11 14.500 18 22" stroke={D} strokeWidth="1.500" /><rect x="1" y="9" width="10.500" height="11" fill="#fff" stroke={D} strokeWidth="1.300" /><rect x="17" y=".7" width="11" height="11" fill="#fff" stroke={D} strokeWidth="1.300" /><rect x="17" y="17" width="11" height="11" fill="#fff" stroke={D} strokeWidth="1.300" /><path d="M3.500 13h5.500M3.500 16h5.500M19.500 4.500h6M19.500 7.500h6M19.500 21h6M19.500 24h6" stroke="#605e5c" /></svg>
          <div>Manage</div><div>relationships</div>
        </BigButton>
        <GroupName>Relationships</GroupName>
      </Group>
      <Group $w={70}>
        <BigButton>
          <svg width="29" height="30" viewBox="0 0 29 30"><rect x="1.500" y="3.500" width="26" height="21" fill="#fff" stroke={D} strokeWidth="1.200" /><rect x="1.500" y="3.500" width="8.500" height="21" fill={B} stroke={K} /><path d="M1.500 10.500h26M1.500 17.500h26M10 3.500v21M19 3.500v21" stroke={D} /></svg>
          <div>New</div><div>column</div>
        </BigButton>
        <GroupName>Calculations</GroupName>
      </Group>
      <Collapse><Lines w={9} h={6} s={1.8} c="#252423" d="M.8 5 4.500 1.200 8.200 5" /></Collapse>
    </Ribbon>
  </>
);

export default function App() {
  return (
    <Window>
      <Global />
      <Header />
      <Body>
        <Rail>
          <RailItem><Lines w={17} h={16} c="#000" s={1.1} d="M2.500 1v13.500H16M5 12.500V5h2v7.500ZM9 12.500V7h2v5.500ZM12.500 12.500V3h2v9.500Z" /></RailItem>
          <RailItem><Lines w={17} h={16} c="#797775" s={1.2} d="M1.500 1h15v14h-15ZM1.500 5.500h15M1.500 8.700h15M1.500 12h15M6.500 5.500V15M11.500 5.500V15" /></RailItem>
          <RailItem><Lines w={18} h={18} c="#797775" s={1.2} d="M.6 5.500h7v7.500h-7ZM.6 9h7M10.500 1h7v5.500h-7ZM10.500 3.500h7M10.500 11h7v6h-7ZM10.500 13.500h7M4 5.500V2.500h6.500M4 13v2.500h6.500M7.500 9H9v4h1.500" /></RailItem>
          <RailItem><svg width="18" height="18" viewBox="0 0 18 18" overflow="visible"><path d="M4 9V1h6l3 3v6M10 1v3h3M14.500 5v9h-1" fill="none" stroke="#797775" strokeWidth="1.200" /><text x="-1" y="16" fontSize="7" fontWeight="600" fill="#797775">DAX</text></svg></RailItem>
        </Rail>
        <Center>
          <Work>
            <Canvas>
              <VisualGrid>
                <Visual>
                  <VHead $h={22}><VTitle>Sum of Close by Date</VTitle></VHead>
                  <ColumnPlot from={50} top={22} plot={[26, 138]} x0={53.700} tickX={39.500} labels={L20} bottom={186.500} labelLen={42.500} axis="Sum of Close" axisSpan={[49.500, 114.500]} dateY={202} barY={208} parts={[[1, BLUE]]} />
                </Visual>
                <Visual>
                  <VHead $h={41}><VTitle>Sum of Close and Sum of High by Date</VTitle><Legend $gap={5}><Key $w={70} $c={BLUE}>Sum of Close</Key><Key $w={68} $c={NAVY}>Sum of High</Key></Legend></VHead>
                  <ColumnPlot from={48} top={41} plot={[48.500, 142.700]} x0={54} tickX={39.500} labels={L2} bottom={186.500} labelLen={38} axis="Sum of Close and ..." axisSpan={[48, 143]} dateY={201.500} barY={207.500} parts={[[.5, NAVY], [.5, BLUE]]} />
                </Visual>
                <Visual>
                  <VHead $h={41}><VTitle>Sum of Close and Sum of High by Date and Name</VTitle><Legend $gap={5}><Key $w={70} $c={BLUE}>Sum of Close</Key><Key $w={68} $c={NAVY}>Sum of High</Key></Legend></VHead>
                  <MultiplesPlot top={41} name={52} plot={[67.500, 80]} second={118.500} step={6.200} cross={[91.500, 41, 141.500]} label="1/10/20..." labelLen={37.500} bottom={184} dateY={199.500} barY={205} parts={[[.5, NAVY], [.5, BLUE]]} />
                </Visual>
                <Visual>
                  <VHead $h={19}><VTitle>Sum of Close, Sum of High and Sum of Low by Date</VTitle></VHead>
                  <Treemap />
                </Visual>
                <Visual>
                  <VHead $h={41}><VTitle>Sum of Close, Sum of High and Sum of Low by Date</VTitle><Legend $gap={5}><Key $w={70} $c={BLUE}>Sum of Close</Key><Key $w={66} $c={NAVY}>Sum of High</Key><Key $w={68} $c={ORANGE}>Sum of Low</Key></Legend></VHead>
                  <ColumnPlot from={48} top={41} plot={[48.500, 150.700]} x0={54} tickX={39.500} labels={L3} bottom={196.500} labelLen={40} axis="Sum of Close, Sum ..." axisSpan={[48, 150]} dateY={211} barY={218} parts={[[.333, ORANGE], [.333, NAVY], [.334, BLUE]]} />
                </Visual>
                <Visual>
                  <VHead $h={56}><VTitle>Sum of Close, Sum of High, Sum of Low, Sum of<br />Open and Sum of Volume by Date and Name</VTitle><Legend $gap={0}>{[BLUE, NAVY, ORANGE, PURPLE, PINK].map(c => <Key key={c} $w={57} $c={c}>Sum of ...</Key>)}</Legend></VHead>
                  <MultiplesPlot top={56} name={67} plot={[82, 93]} second={132} step={5.300} cross={[104.500, 56, 153.500]} label="1/10/2..." labelLen={33.500} bottom={191.500} dateY={209} barY={216} parts={[[1, PINK]]} />
                  <Selection width="309" height="230">
                    <rect x="2" y="2.500" width="306" height="227" fill="none" stroke="#b3b0ad" />
                    <path d="M1 10V1.500h8M301 1.500h7.500V10M1 221v8h8M301 229h7.500v-8" fill="none" stroke="#979593" strokeWidth="3" />
                    <path d="M149 2h12M149 229h12M2 110v12M308 110v12" stroke="#979593" strokeWidth="4" />
                  </Selection>
                  <VisualTools>
                    <Funnel c="#605e5c" w={1} />
                    <Lines w={15} h={15} c="#605e5c" d="M6 1.500H1v12h13V9M1 8h5.500v5.500M9 1h5v5M14 1 8 7" />
                    <svg width="17" height="4" viewBox="0 0 17 4" fill="#605e5c"><circle cx="2" cy="2" r="1.300" /><circle cx="8.500" cy="2" r="1.300" /><circle cx="15" cy="2" r="1.300" /></svg>
                  </VisualTools>
                </Visual>
              </VisualGrid>
              <PageEdge />
            </Canvas>
            <Filters>
              <PanelHead $pl={12} $pr={9}><Funnel />Filters<Push /><Lines w={14} h={10} d="M1 6C3 0 11 0 13 6M7 4.500a2 2 0 1 1 0 4 2 2 0 0 1 0-4Z" /><Gap $w={1} /><Chevrons /></PanelHead>
              <SearchBox><Lens />Search</SearchBox>
              <FilterScroll>
                <FilterList>
                  <FilterHead $h={35}>Filters on this visual<b>...</b></FilterHead>
                  {FILTERS.map(f => <FilterCard key={f}>{f}<br />is (All)</FilterCard>)}
                  <DropCard>Add data fields here</DropCard>
                  <FilterHead $h={39}>Filters on this page<b>...</b></FilterHead>
                  <DropCard>Add data fields here</DropCard>
                </FilterList>
                <Scroll $h={451} $mt={8} />
              </FilterScroll>
            </Filters>
          </Work>
          <PageBar>
            <ViewModes>
              <Mode $on><Lines w={20} h={17} c="#484644" d="M1 1h18v11H1ZM10 12v3M6 15.500h8" /></Mode>
              <Mode><Lines w={13} h={21} c="#484644" s={1.3} d="M1 1h11v19H1ZM5.500 17.500h2" /></Mode>
              <svg width="30" height="10" viewBox="0 0 30 10" fill="#c8c6c4"><path d="M5 1v8L1 5ZM23 1v8l4-4Z" /></svg>
            </ViewModes>
            <PageTab>Page 1</PageTab>
            <PageTab $on>Page 2</PageTab>
            <AddPage><Lines w={12} h={12} c="#fff" s={2.4} d="M6 1v10M1 6h10" /></AddPage>
          </PageBar>
        </Center>
        <Side $w={181}>
          <PanelHead $pl={8} $pr={8}>Visualizations<Push /><Chevrons /></PanelHead>
          <BuildLabel>Build visual</BuildLabel>
          <BuildTabs>
            <BuildTab $on><svg width="24" height="26" viewBox="0 0 24 26"><path d="M0 1.500h19" stroke={D} strokeWidth="1.400" /><rect x="1" y="6.500" width="22" height="7" fill={GREEN} stroke="#222" strokeDasharray="2 1" /><rect x="1" y="17.500" width="22" height="7" fill={GREEN} stroke="#222" strokeDasharray="2 1" /></svg></BuildTab>
            <BuildTab><Lines w={23} h={26} s={1.3} c="#605e5c" d="M1.500 21V9.500H7M7 21V1.500h5.500V14M12.500 8H16v4M22 8 12 18c-3 0-2 4-6 6 4 1 8 0 8-4Z" /></BuildTab>
            <BuildTab><Lines w={25} h={26} s={1.5} d="M10.500 1.500a9 9 0 1 1 0 18 9 9 0 0 1 0-18ZM17 17l7 7M2 12l5-5 4 3 6-5M6 18v-5M9.500 19v-7M13 18v-6M16 16v-6" /></BuildTab>
          </BuildTabs>
          <Lines w={180} h={14} c="#8a8886" d="M0 10.500H17L24 3l7 7.500H180" />
          <IconGrid>{ICONS.map((ic, i) => <IconCell key={i} $on={i === 5}><svg width="18" height="18" viewBox="0 0 18 18" overflow="visible">{ic}</svg></IconCell>)}</IconGrid>
          <Dots>...</Dots>
          <Wells>
            <WellList>
              <WellName>X-axis</WellName>
              <Well $mb={7}><FieldPill name="Date" /></Well>
              <WellName>Y-axis</WellName>
              <Well $mb={7.5}>{['Close', 'High', 'Low', 'Open', 'Volume'].map(n => <FieldPill key={n} name={`Sum of ${n}`} />)}</Well>
              <WellName $h={26}>Legend</WellName>
              <Well $mb={6} $white><Pill $plain>Add data fields here</Pill></Well>
              <WellName $h={25}>Small multiples</WellName>
            </WellList>
            <Scroll $h={189} $mt={2} />
          </Wells>
        </Side>
        <Side $w={181}>
          <PanelHead $pl={8} $pr={8}>Data<Push /><Chevrons /></PanelHead>
          <DataSearch><Lines w={15} h={15} c="#616161" d="M6 1a5 5 0 1 1 0 10A5 5 0 0 1 6 1ZM9.600 9.600 14 14" />Search</DataSearch>
          <Tree>
            <TreeRow $pad={8}><Lines w={12} h={7} c="#797775" d="m.7.7 5.300 5.300L11.300.7" /><TableSlot><TableGlyph /><OkBadge width="11" height="11" viewBox="0 0 11 11"><circle cx="5.500" cy="5.500" r="5.500" fill={GREEN} /><path d="m3 5.500 2 2 3-3.500" fill="none" stroke="#fff" strokeWidth="1.300" /></OkBadge></TableSlot>stock_data</TreeRow>
            {FIELDS.map(f => (
              <TreeRow key={f} $pad={39} $on={f === 'Name'}>
                <svg width="12" height="12" viewBox="0 0 12 12"><rect width="12" height="12" rx="1" fill={GREEN} /><path d="m2.500 6 2.500 2.700L9.700 3.500" fill="none" stroke="#fff" strokeWidth="1.300" /></svg>
                <SigmaSlot>{f !== 'Date' && f !== 'Name' && <Sigma />}</SigmaSlot>{f}
                {f === 'Volume' && <><Push />···</>}
              </TreeRow>
            ))}
            {['stock_data (2)', 'stock_data (3)'].map(t => (
              <TreeRow key={t} $pad={10}><Lines w={8} h={13} c="#797775" d="m1 .7 6 5.800L1 12.300" /><TableSlot $ml={6}><TableGlyph /></TableSlot>{t}</TreeRow>
            ))}
          </Tree>
        </Side>
      </Body>
      <Status>
        <span>Page 2 of 2</span>
        <ZoomBar>
          -<svg width="100" height="12" viewBox="0 0 100 12"><path d="M0 6h100M50.500 2.500v7" stroke="#605e5c" /><path d="M37 0v12" stroke="#484644" strokeWidth="3" /></svg>+
          <ZoomValue>78%</ZoomValue>
          <Lines w={16} h={13} c="#605e5c" d="M.5.5h15v12H.5ZM3 5V3h2.500M10.500 3H13v2M13 8v2h-2.500M5.500 10H3V8" />
        </ZoomBar>
      </Status>
      <Taskbar>
        <AppRow>{APPS.map((a, i) => <AppSlot key={i} $on={a.on} $dot={a.dot}><svg width="26" height="26" viewBox="0 0 26 26" overflow="visible">{a.art}</svg></AppSlot>)}</AppRow>
        <Tray>
          <Lines w={12} h={8} s={1.3} d="m1 7 5-5.500L11 7" />
          <TrayText $w={57}>ENG<br />IN</TrayText>
          <Lines w={17} h={16} d="M10 3H1v8h13V8M5 14.500h6M8 11v3.500M11 1h5v5.500h-5ZM13.500 6.500V11" />
          <Gap $w={7} />
          <Lines w={17} h={14} d="M1 5v4h3l4 4V1L4 5ZM11 5l5 5M16 5l-5 5" />
          <TrayText $w={76} $a="right">15:53<br />22-10-2024</TrayText>
          <Count>4</Count>
        </Tray>
      </Taskbar>
    </Window>
  );
}
